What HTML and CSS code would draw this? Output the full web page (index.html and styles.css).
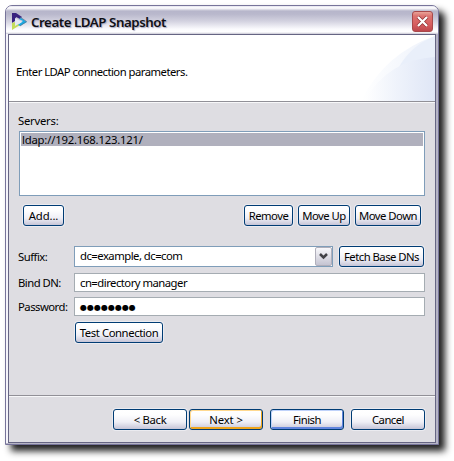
FILE: index.html
```
<!DOCTYPE html>
<html lang="en">
<head>
<meta charset="utf-8">
<title>Create LDAP Snapshot</title>
<link rel="stylesheet" href="styles.css">
</head>
<body>
<main class="window">
  <header class="titlebar">
    <svg class="logo" width="17" height="17" viewBox="0 0 17 17">
      <path d="M1 0h4l6 4-2 2-4-2-1 4-3 2z" fill="#38217f"/>
      <path d="M1 10l3-1v3l4-2 1 2-8 5z" fill="#c5dc5b"/>
      <path d="M10 5l6 4-7 4-2-1 5-4-4-2z" fill="#18a9e2"/>
      <path d="M4 5l7 4-7 4z" fill="#e4e7f5"/>
      <path d="M9 4l6.500 4.500L9 13" fill="none" stroke="#56708c" stroke-width=".7"/>
    </svg>
    <h1 class="title"><span>Create LDAP Snapshot</span></h1>
    <button class="close" aria-label="Close"><svg width="21" height="21" viewBox="0 0 21 21"><path d="M5.500 5.500l10 10M15.500 5.500l-10 10" stroke="#8d3033" stroke-width="4"/><path d="M5.500 5.500l10 10M15.500 5.500l-10 10" stroke="#fff" stroke-width="2.500"/></svg></button>
  </header>
  <div class="client">
    <section class="banner">
      <p>Enter LDAP connection parameters.</p>
      <svg class="swoosh" width="76" height="66" viewBox="0 0 76 66">
        <defs><linearGradient id="g"><stop offset="0" stop-color="#fff"/><stop offset=".45" stop-color="#eff3fb"/><stop offset="1" stop-color="#dfe6f6"/></linearGradient><linearGradient id="h"><stop offset="0" stop-color="#fff"/><stop offset="1" stop-color="#edf2fb"/></linearGradient></defs>
        <path d="M2 66Q26 18 76 1V66Z" fill="url(#h)"/>
        <path d="M36 40Q48 12 76 1V30Z" fill="#e9effa"/>
        <path d="M5 66Q30 24 76 22V66Z" fill="url(#g)"/>
      </svg>
    </section>
    <section class="body">
      <div class="label"><span>Servers:</span></div>
      <div class="list"><div class="row"><span>ldap://192.168.123.121/</span></div></div>
      <div class="actions">
        <button class="btn add"><span>Add...</span></button>
        <button class="btn remove"><span>Remove</span></button>
        <button class="btn up"><span>Move Up</span></button>
        <button class="btn down"><span>Move Down</span></button>
      </div>
      <div class="field suffix">
        <label><span>Suffix:</span></label>
        <div class="combo"><span>dc=example, dc=com</span><button class="arrow" aria-label="Open"><svg width="9" height="7" viewBox="0 0 9 7"><path d="M1 1l3.500 3.500L8 1" fill="none" stroke="#424247" stroke-width="2.500"/></svg></button></div>
        <button class="btn fetch"><span>Fetch Base DNs</span></button>
      </div>
      <div class="field bind">
        <label><span>Bind DN:</span></label>
        <div class="input"><span>cn=directory manager</span></div>
      </div>
      <div class="field pass">
        <label><span>Password:</span></label>
        <div class="input dots"><span>●●●●●●●●</span></div>
      </div>
      <button class="btn test"><span>Test Connection</span></button>
    </section>
    <footer class="footer">
      <button class="btn nav back"><span>&lt; Back</span></button>
      <button class="btn nav next"><span>Next &gt;</span></button>
      <button class="btn nav finish"><span>Finish</span></button>
      <button class="btn nav cancel"><span>Cancel</span></button>
    </footer>
  </div>
</main>
</body>
</html>
```
FILE: styles.css
```
* { box-sizing: border-box; }
body { margin: 0; height: 461px; padding: 5px 0 0 5px; background: #fff; overflow: hidden; font: 11.3px/14px "Noto Sans", sans-serif; letter-spacing: -.52px; color: #000; }
button { font: inherit; letter-spacing: inherit; color: inherit; padding: 0; margin: 0; }
span, p { white-space: nowrap; }
.window { width: 434px; height: 440px; border: 1px solid #77749a; border-radius: 7px 7px 0 0; background: #f5f4fa; padding: 0 2px 1px; box-shadow: inset -2px -1px 0 #b5b4c5, 6px 6px 7px 0 #000000e0; }
.titlebar { height: 28px; margin: 0 -2px; border-radius: 6px 6px 0 0; display: flex; align-items: center; padding: 0 5px 0 5px; background: linear-gradient(#e4e3ee 0, #fff 2px, #b7b6cb 5px, #b9b8cc 8px, #d2d1df 15px, #fafafd 23px, #fff 26px, #c8c7d4 28px); }
.logo { margin: 2px 3px 0 0; }
.title { margin: 0; flex: 1; font: 600 13.300px/18px "Noto Sans", sans-serif; letter-spacing: -.45px; color: #101016; text-shadow: 1px 1px 1px #aaaac0; padding-top: 3px; }
.close { width: 21px; height: 21px; margin-top: 3px; border: 1px solid #a8494b; border-radius: 3px; background: linear-gradient(#e9a398 0, #dc7370 4px, #d85e60 12px, #bd474d); display: flex; align-items: center; justify-content: center; }
.client { height: 409px; border: 1px solid #666583; background: #dedde2; }
.banner { height: 67px; background: #fff; border-bottom: 1px solid #919097; display: flex; align-items: center; justify-content: space-between; padding-left: 7px; }
.banner p { margin: 8px 0 0; }
.swoosh { align-self: flex-end; }
.body { height: 293px; border-top: 1px solid #f7f7f9; padding: 11px 10px 0; }
.label { height: 17px; letter-spacing: -.25px; margin-left: -1px; }
.list { height: 65px; width: 406px; border: 1px solid #7f9db9; background: #fff; padding: 1px; }
.row { height: 13px; background: #b0b0bd; padding-left: 1px; display: flex; align-items: center; letter-spacing: -.2px; }
.actions { display: flex; width: 406px; margin: 9px 0 0 0; padding: 0 4px; }
.btn { height: 21px; border: 1px solid #003c74; border-radius: 3px; background: linear-gradient(#fff 0, #fdfdfe 5px, #efeff6 12px, #c6c5d7 100%); box-shadow: 0 0 0 1px #ebebf0; display: flex; align-items: center; justify-content: center; flex: none; }
.add { width: 41px; letter-spacing: -.1px; }
.remove { width: 49px; margin-left: auto; }
.up { width: 52px; margin-left: 5px; }
.down { width: 66px; margin: 0 0 0 5px; }
.field { display: flex; align-items: center; width: 406px; }
label { width: 56px; margin-left: -1px; flex: none; }
.suffix { margin-top: 20px; height: 21px; }
.combo { width: 259px; height: 21px; border: 1px solid #7f9db9; background: #fff; padding: 0 0 0 5px; display: flex; align-items: center; justify-content: space-between; }
.combo span { margin-top: -2px; }
.arrow { width: 17px; height: 19px; border: 1px solid #b0afbb; border-radius: 2px; background: linear-gradient(#f8f8fb, #c5c4d2); display: flex; align-items: center; justify-content: center; }
.fetch { width: 85px; margin-left: 6px; }
.bind { margin-top: 6px; }
.input { height: 19px; flex: 1; border: 1px solid #a5acb2; background: #fff; display: flex; align-items: center; padding-left: 5px; }
.pass { margin-top: 5px; }
.dots { font: 8px/12px "DejaVu Sans", sans-serif; letter-spacing: 0; padding-top: 2px; }
.test { width: 88px; margin: 6px 0 0 56px; letter-spacing: -.42px; }
.footer { height: 46px; border-top: 1px solid #919097; box-shadow: inset 0 1px #f7f7f9; padding: 13px 10px 0 0; display: flex; justify-content: flex-end; }
.nav { width: 74px; }
.back { letter-spacing: -.3px; }
.next { margin-left: 2px; letter-spacing: -.1px; box-shadow: inset 1px 1px #ffd990, inset -1px -2px #efa51c; }
.finish { margin-left: 7px; box-shadow: inset 1px 1px #bfd2fa, inset -1px -2px #6285de; }
.cancel { margin-left: 7px; }
```
